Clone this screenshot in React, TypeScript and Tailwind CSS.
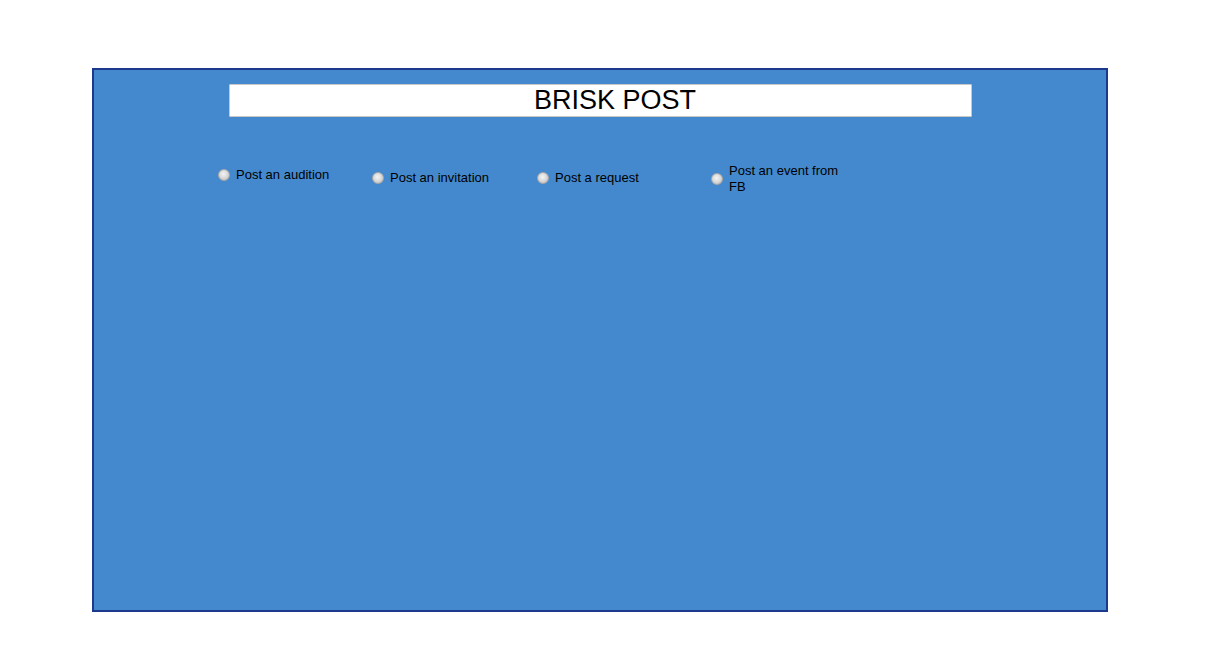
import React from "react";

const options = [
  { label: "Post an audition", width: "w-[154px]", offset: "mt-[5px]" },
  { label: "Post an invitation", width: "w-[165px]", offset: "mt-[8px]" },
  { label: "Post a request", width: "w-[174px]", offset: "mt-[8px]" },
  { label: "Post an event from FB", width: "w-[140px]", offset: "mt-[1px]" },
];

const Radio = () => (
  <span className="block h-[12px] w-[12px] shrink-0 rounded-full border border-[#a8a8a8] bg-[radial-gradient(circle_at_45%_40%,#f4f4f4_0%,#dcdcdc_45%,#b4b4b4_100%)]" />
);

export default function App() {
  return (
    <div className="min-h-[667px] w-[1211px] bg-white pt-[68px] pl-[92px] font-['Liberation_Sans',Arial,sans-serif]">
      <div className="h-[544px] w-[1016px] border-2 border-[#1c3a8c] bg-[#4489ce]">
        <div className="ml-[135px] mt-[14px] flex h-[33px] w-[743px] items-center justify-center rounded-[1px] border border-[#c8c8c8] bg-white pl-[29px] text-[27px] leading-none text-black">
          BRISK POST
        </div>
        <div className="ml-[124px] mt-[45px] flex items-start">
          {options.map((o) => (
            <div key={o.label} className={`flex items-center gap-[6px] ${o.width} ${o.offset}`}>
              <Radio />
              <span className="w-[112px] text-[13px] leading-[16px] text-black">{o.label}</span>
            </div>
          ))}
        </div>
      </div>
    </div>
  );
}
